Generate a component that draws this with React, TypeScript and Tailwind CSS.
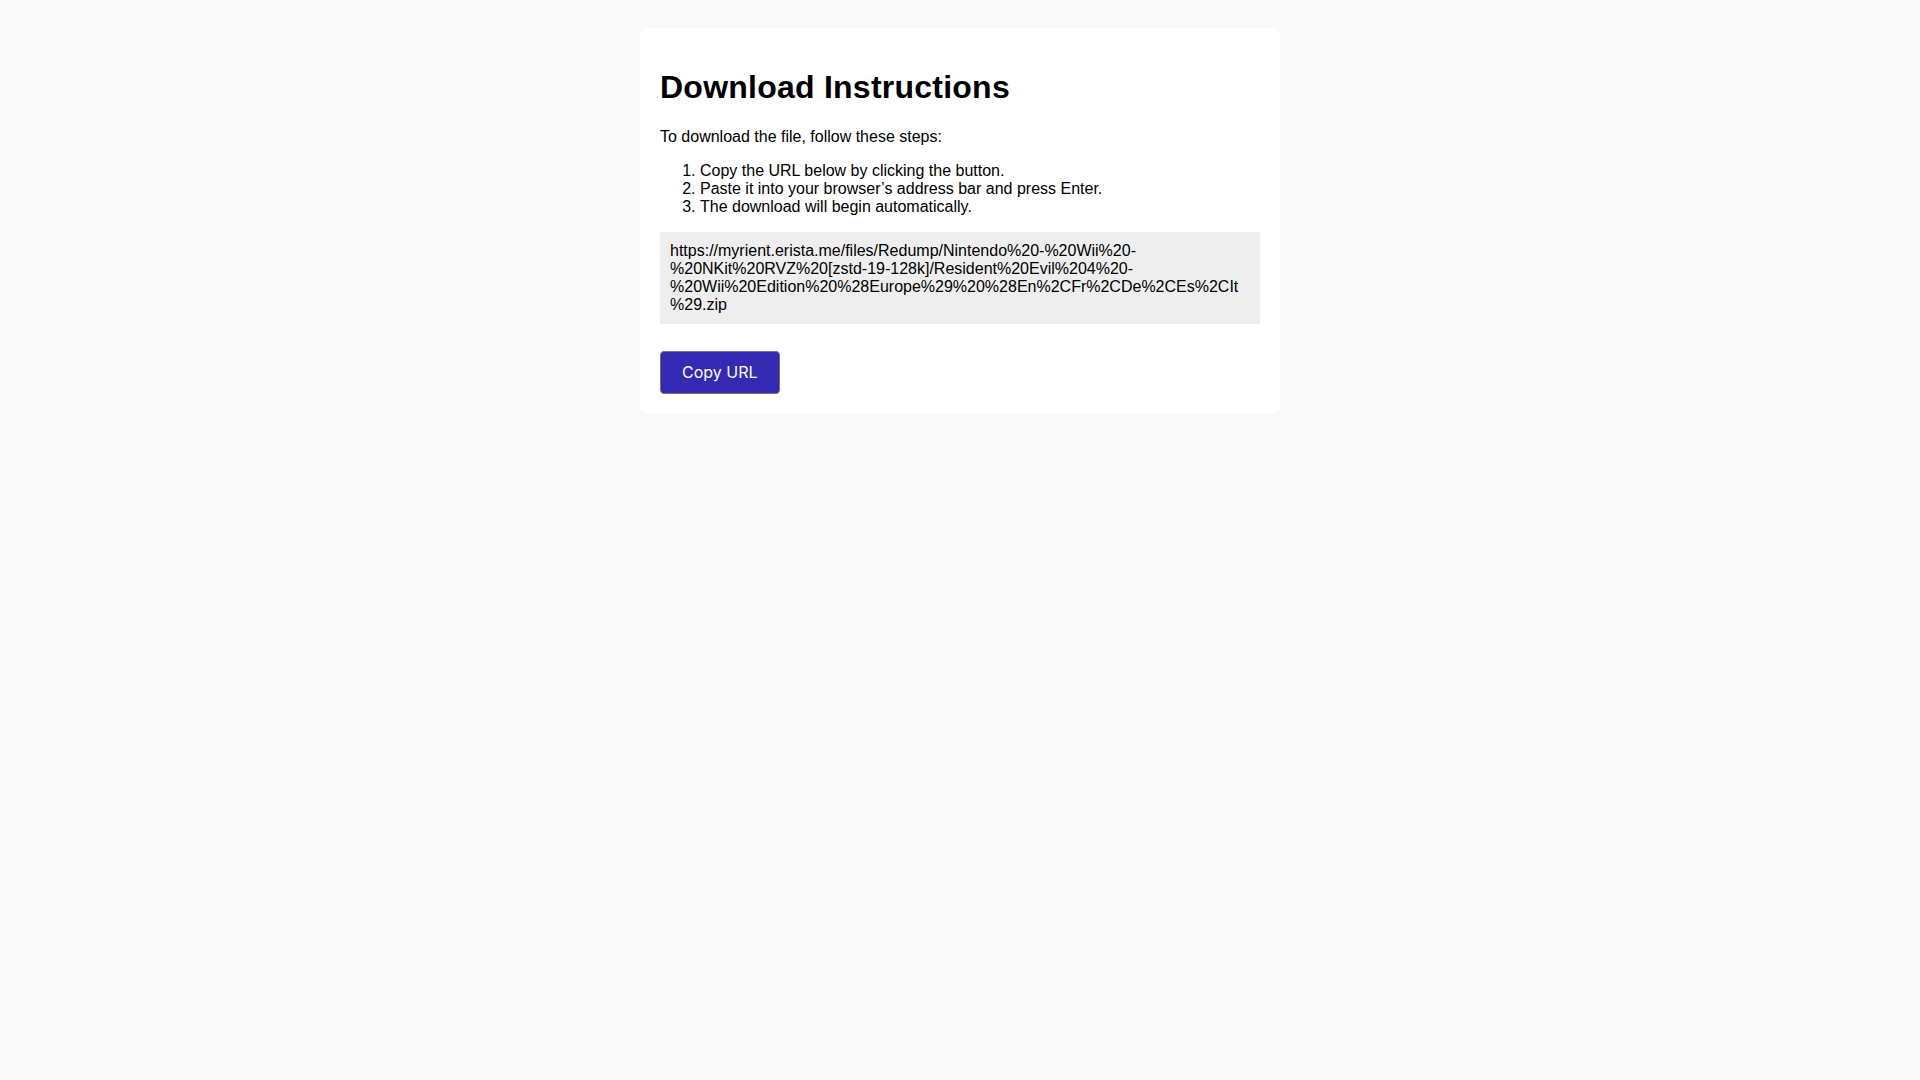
import React from "react";

const url =
  "https://myrient.erista.me/files/Redump/Nintendo%20-%20Wii%20-%20NKit%20RVZ%20[zstd-19-128k]/Resident%20Evil%204%20-%20Wii%20Edition%20%28Europe%29%20%28En%2CFr%2CDe%2CEs%2CIt%29.zip";

export default function App() {
  return (
    <div className="min-h-screen bg-[#f9f9f9] pt-[28px] font-['Liberation_Sans',Arial,sans-serif] text-black">
      <div className="mx-auto w-[640px] rounded-lg bg-white p-5">
        <h1 className="mt-[21px] mb-[22px] text-[32px] font-bold leading-[1.15] tracking-[0.24px]">
          Download Instructions
        </h1>
        <p className="my-4 text-base leading-[1.15]">To download the file, follow these steps:</p>
        <ol className="my-4 list-decimal pl-10 text-base leading-[18px]">
          <li>Copy the URL below by clicking the button.</li>
          <li>Paste it into your browser’s address bar and press Enter.</li>
          <li>The download will begin automatically.</li>
        </ol>
        <div className="break-words bg-[#eeeeee] p-2.5 text-base leading-[18px]">{url}</div>
        <button
          className="mt-[27px] block rounded border border-[#767676] bg-[#3329b3] px-[21px] py-[11px] font-['Inter',sans-serif] text-base leading-[19px] text-white"
          onClick={() => navigator.clipboard?.writeText(url)}
        >
          Copy URL
        </button>
      </div>
    </div>
  );
}
